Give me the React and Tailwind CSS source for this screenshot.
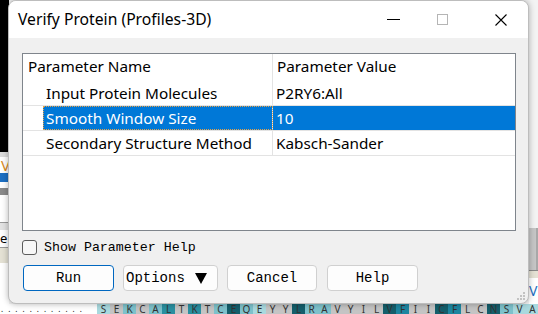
const seq = [
  ["S", "bg-[#a9d9de]"], ["E", "bg-[#c4c4c4]"], ["K", "bg-[#7dc1cb]"], ["C", "bg-[#c4c4c4]"],
  ["A", "bg-[#7dc1cb]"], ["L", "bg-[#2a8fa0]"], ["T", "bg-[#c4c4c4]"], ["K", "bg-[#2a8fa0]"],
  ["T", "bg-[#c4c4c4]"], ["C", "bg-[#7dc1cb]"], ["E", "bg-[#145e6b]"], ["Q", "bg-[#7dc1cb]"],
  ["E", "bg-[#a9d9de]"], ["Y", "bg-[#c4c4c4]"], ["Y", "bg-[#c4c4c4]"], ["L", "bg-[#145e6b]"],
  ["R", "bg-[#7dc1cb]"], ["A", "bg-[#7dc1cb]"], ["V", "bg-[#c4c4c4]"], ["Y", "bg-[#c4c4c4]"],
  ["I", "bg-[#c4c4c4]"], ["L", "bg-[#c4c4c4]"], ["V", "bg-[#145e6b]"], ["F", "bg-[#1d86a0]"],
  ["I", "bg-[#c4c4c4]"], ["I", "bg-[#c4c4c4]"], ["C", "bg-[#145e6b]"], ["F", "bg-[#1d86a0]"],
  ["L", "bg-[#c4c4c4]"], ["C", "bg-[#c4c4c4]"], ["N", "bg-[#145e6b]"], ["S", "bg-[#7dc1cb]"],
  ["V", "bg-[#a9d9de]"], ["A", "bg-[#a9d9de]"],
];

const rows = [
  ["Input Protein Molecules", "P2RY6:All"],
  ["Smooth Window Size", "10"],
  ["Secondary Structure Method", "Kabsch-Sander"],
];

function Btn({ children, focused, className = "" }) {
  return (
    <button
      className={`h-[26px] rounded-[4px] bg-[#fdfdfd] text-[14px] text-black ${className} ${
        focused ? "border border-[#0067c0]" : "border border-[#d0d0d0]"
      }`}
    >
      {children}
    </button>
  );
}

export default function App() {
  const mono = { fontFamily: '"Liberation Mono", "DejaVu Sans Mono", monospace' };
  return (
    <div className="relative w-[538px] h-[314px] overflow-hidden bg-[#f3f3f3]" style={{ fontFamily: '"Noto Sans", "Open Sans", sans-serif' }}>
      {/* desktop behind the dialog */}
      <div className="absolute left-0 top-0 w-[9px] h-[152px] bg-black" />
      <div className="absolute left-0 top-[152px] w-[9px] h-[152px] flex flex-col bg-white">
        <div className="h-[5px] bg-[#dcdcdc]" />
        <div className="h-[16px] text-[15px] leading-[16px] text-[#d98a1c] pl-[1px]">V</div>
        <div className="h-[9px] bg-[#1c6fc2]" />
        <div className="h-[6px] bg-white" />
        <div className="h-[7px] bg-[#8a8a8a]" />
        <div className="h-[28px] bg-white border-b border-[#9a9a9a]" />
        <div className="h-[7px] bg-[#e2e2e2]" />
        <div className="h-[17px] text-[13px] leading-[17px] text-black">e</div>
        <div className="h-[16px] bg-[#e4e1d4] border-t border-[#9a9a9a]" />
        <div className="flex-1 bg-white" />
      </div>
      <div className="absolute right-0 top-[228px] w-[9px] h-[42px] bg-[#c6c6c6] border-r-2 border-[#a8a8a8]" />
      <div className="absolute right-0 top-[270px] w-[9px] h-[8px] bg-[#e4e1d4] border-t border-[#888]" />
      <div className="absolute right-0 top-[278px] w-[9px] h-[26px] bg-white text-[14px] leading-[26px] text-[#1c6fc2]">V</div>
      <div className="absolute left-0 bottom-0 w-[538px] h-[10px] flex bg-white">
        <div className="w-[97px] shrink-0 flex items-end gap-[5px] pl-[1px] text-[8px] leading-[10px]">
          {Array.from({ length: 12 }).map((_, i) => (
            <span key={i}>.</span>
          ))}
        </div>
        {seq.map(([l, c], i) => (
          <div key={i} className={`w-[13px] shrink-0 ${c} text-[10px] leading-[10px] text-[#333] text-center`}>
            {l}
          </div>
        ))}
      </div>

      {/* dialog window */}
      <div className="absolute left-[8px] top-0 w-[521px] h-[304px] rounded-[8px] overflow-hidden border border-[#bdbdbd] flex flex-col bg-[#f0f0f0] shadow-[0_0_6px_rgba(0,0,0,0.3)]">
        <div className="h-[37px] shrink-0 bg-white flex items-center">
          <div className="pl-[9px] text-[15.7px] text-black flex-1">Verify Protein (Profiles-3D)</div>
          <div className="w-[46px] flex justify-center">
            <div className="w-[13px] h-px bg-black" />
          </div>
          <div className="w-[56px] flex justify-center pr-[4px]">
            <div className="w-[11px] h-[11px] border border-[#b5b5b5]" />
          </div>
          <div className="w-[56px] flex justify-center pl-[2px]">
            <svg width="12" height="12" viewBox="0 0 12 12">
              <path d="M0.5 0.5 L11.5 11.5 M11.5 0.5 L0.5 11.5" stroke="#000" strokeWidth="1.1" />
            </svg>
          </div>
        </div>

        <div className="flex-1 flex flex-col px-[13px] pt-[15px]">
          <div className="w-[494px] h-[178px] bg-white border border-[#7f858c] flex flex-col">
            <div className="h-[27px] flex text-[15.3px] text-black">
              <div className="w-[250px] pl-[5px] pb-[3px] flex items-center border-r border-[#e3e3e3]">Parameter Name</div>
              <div className="flex-1 pl-[4px] pb-[3px] flex items-center">Parameter Value</div>
            </div>
            {rows.map(([name, val], i) => {
              const sel = i === 1;
              return (
                <div key={i} className="h-[25px] flex text-[15.3px] border-b border-[#e3e3e3]">
                  <div className="w-[20px] shrink-0" />
                  <div
                    className={`w-[230px] pl-[3px] flex items-center border-r ${
                      sel
                        ? "bg-[#0078d7] text-white border-[#e3e3e3] outline-1 outline-dotted outline-[#e6a24a] -outline-offset-1"
                        : "text-black border-[#e3e3e3]"
                    }`}
                  >
                    {name}
                  </div>
                  <div className={`flex-1 pl-[3px] flex items-center ${sel ? "bg-[#0078d7] text-white" : "text-black"}`}>
                    {val}
                  </div>
                </div>
              );
            })}
          </div>

          <div className="mt-[8px] h-[17px] flex items-center gap-[7px]" style={mono}>
            <div className="w-[15px] h-[15px] rounded-[3px] border border-[#5c5c5c] bg-[#f7f7f7]" />
            <span className="text-[13.3px] text-black">Show Parameter Help</span>
          </div>

          <div className="mt-[9px] flex gap-[9px] pl-px" style={mono}>
            <Btn focused className="w-[91px]">Run</Btn>
            <button className="h-[26px] w-[95px] rounded-[4px] bg-[#fdfdfd] border border-[#d0d0d0] text-[14px] text-black flex items-center pl-[2px]">
              Options
              <svg className="ml-[10px]" width="12" height="11" viewBox="0 0 12 11">
                <path d="M0 0 H12 L6 11 Z" fill="#000" />
              </svg>
            </button>
            <Btn className="w-[90px]">Cancel</Btn>
            <Btn className="w-[91px] ml-px">Help</Btn>
          </div>
        </div>

        <div className="absolute right-[3px] bottom-[3px] grid grid-cols-3 gap-px">
          {[0, 0, 1, 0, 1, 1, 1, 1, 1].map((v, i) => (
            <div key={i} className={`w-[2px] h-[2px] ${v ? "bg-[#c2c2c2]" : ""}`} />
          ))}
        </div>
      </div>
    </div>
  );
}
